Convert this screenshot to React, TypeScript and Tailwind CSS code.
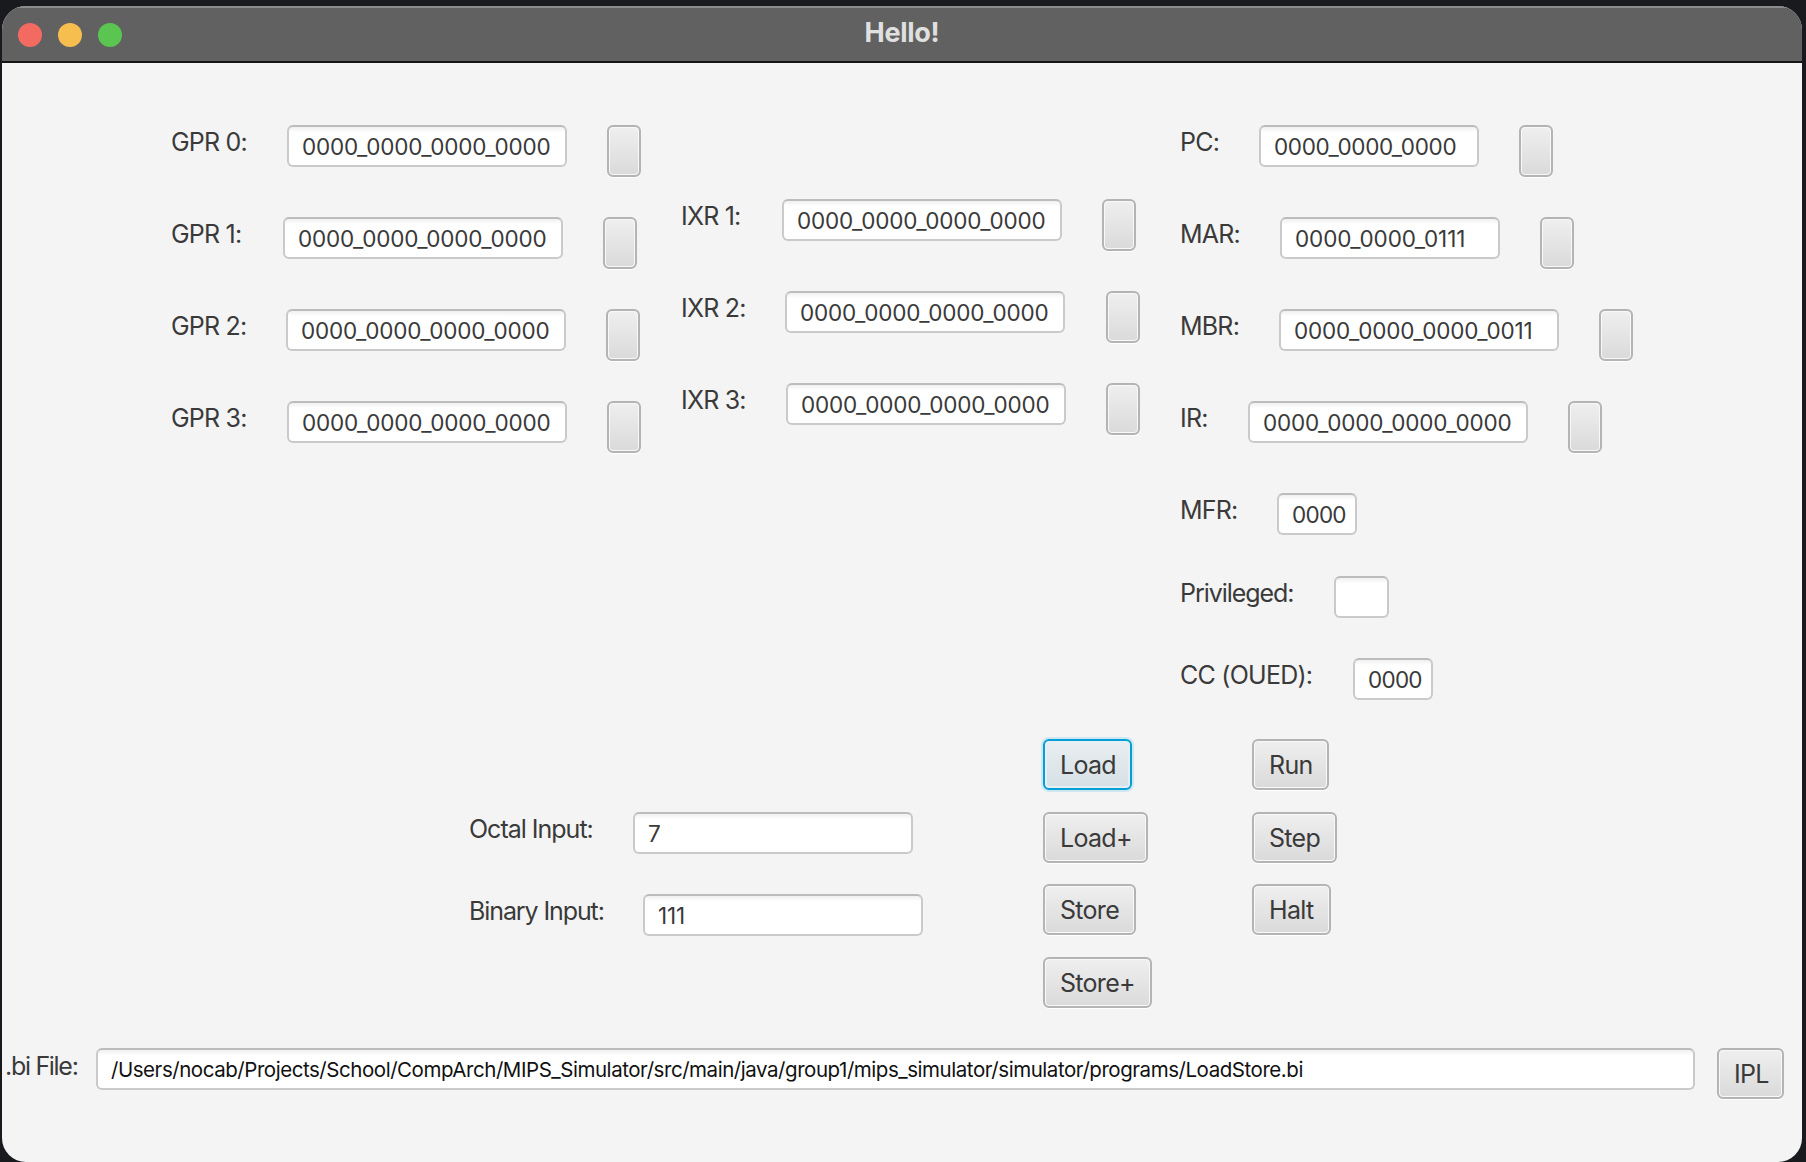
import React from 'react';

const font = { fontFamily: 'Inter, "Liberation Sans", sans-serif' };

const Field = ({ value, className = '' }: { value: string; className?: string }) => (
  <div className={`h-[42px] shrink-0 rounded-[6px] border-2 border-[#cacaca] border-t-[#bcbcbc] bg-gradient-to-b from-[#f0f0f0] from-0% to-white to-[14%] pl-[13px] leading-[39px] whitespace-nowrap overflow-hidden ${className}`}>
    {value}
  </div>
);

const Toggle = () => (
  <button className="h-[52px] w-[34px] shrink-0 rounded-[6px] border-2 border-[#b4b4b4] bg-gradient-to-b from-[#efefef] to-[#dadada] shadow-[inset_0_0_0_1px_#f8f8f8,0_1px_0_#fff]" />
);

const Action = ({ label, className = '', focused = false }: { label: string; className?: string; focused?: boolean }) => (
  <button
    className={`h-[51px] rounded-[6px] border-2 bg-gradient-to-b pl-[15px] pt-[3px] text-left text-[25px] tracking-[-0.7px] text-[#3a3a3a] ${
      focused
        ? 'border-[#049fd6] from-[#e9eef1] to-[#d6e0e5] shadow-[0_0_0_2px_#cfe7f1,inset_0_0_0_2px_#e6f0f4]'
        : 'border-[#b4b4b4] from-[#efefef] to-[#dadada] shadow-[inset_0_0_0_1px_#f8f8f8,0_1px_0_#fff]'
    } ${className}`}
  >
    {label}
  </button>
);

const Label = ({ text, className = '' }: { text: string; className?: string }) => (
  <div className={`shrink-0 text-[25px] leading-[34px] text-[#3a3a3a] whitespace-nowrap ${className}`}>{text}</div>
);

const regText = 'text-[22.5px] tracking-[-0.17px] text-[#3a3a3a]';
const shortText = 'text-[22.5px] tracking-[-0.75px] text-[#3a3a3a]';
const ZERO = '0000_0000_0000_0000';

const Row = ({ label, labelW, value, fieldW, gap, text = regText }: { label: string; labelW: string; value: string; fieldW: string; gap: string; text?: string }) => (
  <div className="flex h-[92px] items-start">
    <Label text={label} className={`tracking-[-0.8px] ${labelW}`} />
    <Field value={value} className={`${text} ${fieldW}`} />
    <div className={gap} />
    <Toggle />
  </div>
);

const App: React.FC = () => {
  return (
    <div className="h-[1162px] w-full overflow-hidden bg-[#191a1d] pl-[2px] pt-[6px]" style={font}>
      <div className="flex h-[1156px] w-[1800px] flex-col overflow-hidden rounded-[24px] bg-[#f4f4f4]">
        {/* Title bar */}
        <div className="relative flex h-[57px] shrink-0 items-center border-t-2 border-b-2 border-t-[#8c8c8c] border-b-[#141414] bg-[#616161] pl-[16px]">
          <div className="h-[24px] w-[24px] rounded-full bg-[#f26a60]" />
          <div className="ml-[16px] h-[24px] w-[24px] rounded-full bg-[#f6bd4f]" />
          <div className="ml-[16px] h-[24px] w-[24px] rounded-full bg-[#5bc552]" />
          <div className="absolute inset-x-0 top-[5px] text-center text-[27px] font-bold tracking-[-0.3px] text-[#e0e0e0]">Hello!</div>
        </div>

        {/* Registers */}
        <div className="flex pl-[169px] pt-[62px]">
          <div className="w-[510px] shrink-0">
            <Row label="GPR 0:" labelW="w-[116px]" value={ZERO} fieldW="w-[280px]" gap="w-[40px]" />
            <Row label="GPR 1:" labelW="w-[112px]" value={ZERO} fieldW="w-[280px]" gap="w-[40px]" />
            <Row label="GPR 2:" labelW="w-[115px]" value={ZERO} fieldW="w-[280px]" gap="w-[40px]" />
            <Row label="GPR 3:" labelW="w-[116px]" value={ZERO} fieldW="w-[280px]" gap="w-[40px]" />
          </div>
          <div className="w-[499px] shrink-0 pt-[74px]">
            <Row label="IXR 1:" labelW="w-[101px]" value={ZERO} fieldW="w-[280px]" gap="w-[40px]" />
            <Row label="IXR 2:" labelW="w-[104px]" value={ZERO} fieldW="w-[280px]" gap="w-[41px]" />
            <Row label="IXR 3:" labelW="w-[105px]" value={ZERO} fieldW="w-[280px]" gap="w-[40px]" />
          </div>
          <div className="flex-1">
            <Row label="PC:" labelW="w-[79px]" value="0000_0000_0000" fieldW="w-[220px]" gap="w-[40px]" text="text-[22.5px] tracking-[-0.32px] text-[#3a3a3a]" />
            <Row label="MAR:" labelW="w-[100px]" value="0000_0000_0111" fieldW="w-[220px]" gap="w-[40px]" text="text-[22.5px] tracking-[-0.1px] text-[#3a3a3a]" />
            <Row label="MBR:" labelW="w-[99px]" value="0000_0000_0000_0011" fieldW="w-[280px]" gap="w-[40px]" />
            <Row label="IR:" labelW="w-[68px]" value={ZERO} fieldW="w-[280px]" gap="w-[40px]" />
            <div className="flex h-[83px] items-start">
              <Label text="MFR:" className="w-[97px] tracking-[-0.8px]" />
              <Field value="0000" className={`w-[80px] ${shortText}`} />
            </div>
            <div className="flex h-[82px] items-start">
              <Label text="Privileged:" className="w-[154px] tracking-[-1.05px]" />
              <Field value="" className="w-[55px]" />
            </div>
            <div className="flex h-[81px] items-start">
              <Label text="CC (OUED):" className="w-[173px] tracking-[-0.75px]" />
              <Field value="0000" className={`w-[80px] ${shortText}`} />
            </div>
          </div>
        </div>

        {/* Inputs and controls */}
        <div className="flex pl-[467px]">
          <div className="w-[574px] shrink-0 pt-[73px]">
            <div className="flex h-[82px] items-start">
              <Label text="Octal Input:" className="w-[164px] tracking-[-1px]" />
              <Field value="7" className={`w-[280px] ${regText}`} />
            </div>
            <div className="flex items-start">
              <Label text="Binary Input:" className="w-[174px] tracking-[-1.1px]" />
              <Field value="111" className={`w-[280px] ${regText}`} />
            </div>
          </div>
          <div className="flex w-[209px] shrink-0 flex-col items-start gap-[21.5px]">
            <Action label="Load" focused className="w-[89px]" />
            <Action label="Load+" className="w-[105px]" />
            <Action label="Store" className="w-[93px]" />
            <Action label="Store+" className="w-[109px]" />
          </div>
          <div className="flex flex-col items-start gap-[21.5px]">
            <Action label="Run" className="w-[77px]" />
            <Action label="Step" className="w-[85px]" />
            <Action label="Halt" className="w-[79px]" />
          </div>
        </div>

        {/* Program file */}
        <div className="mt-[40px] flex items-start pl-[3px]">
          <Label text=".bi File:" className="w-[91px] pt-[1px] tracking-[-1.3px]" />
          <Field
            value="/Users/nocab/Projects/School/CompArch/MIPS_Simulator/src/main/java/group1/mips_simulator/simulator/programs/LoadStore.bi"
            className="w-[1599px] text-[20.5px] tracking-[-0.45px] text-[#111]"
          />
          <Action label="IPL" className="ml-[22px] w-[67px]" />
        </div>
      </div>
    </div>
  );
};

export default App;
